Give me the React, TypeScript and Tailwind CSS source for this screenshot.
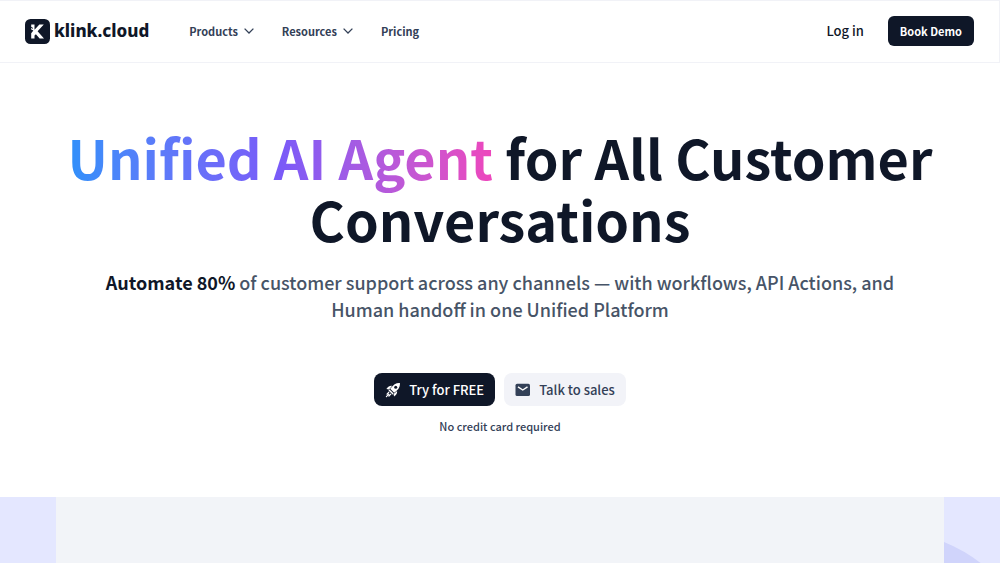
function Chevron() {
  return (
    <svg viewBox="0 0 10 6" className="h-[6px] w-[10px]" fill="none" stroke="currentColor" strokeWidth="1.3" aria-hidden="true">
      <path d="M0.6 0.6 5 5 9.4 0.6" />
    </svg>
  );
}

function Rocket() {
  return (
    <svg viewBox="0 0 16 16" className="size-4" fill="none" aria-hidden="true">
      <path d="M14.9 1C11.4 0.7 8.6 2.2 5.2 6.8L9.2 10.8C13.8 7.4 15.2 4.6 14.9 1Z" fill="#fff" />
      <circle cx="10.7" cy="5.3" r="1.5" fill="#0f1728" />
      <path d="M7 3.9C4.9 3.6 3.2 4.6 1.4 7L4 7.4Z" fill="#fff" />
      <path d="M12.1 9C12.4 11.1 11.4 12.8 9 14.6L8.6 12Z" fill="#fff" />
      <path d="M4.3 8.2 7.8 11.7" stroke="#fff" strokeWidth="1.4" strokeLinecap="round" />
      <path d="M3.9 10.2 2 12.1M5.8 12.1 3.9 14M3.8 12.2 1.4 14.6" stroke="#fff" strokeWidth="1.2" strokeLinecap="round" />
    </svg>
  );
}

function Envelope() {
  return (
    <svg viewBox="0 0 16 14" className="h-[14px] w-4" fill="none" aria-hidden="true">
      <rect x="0.5" y="0.8" width="14.5" height="12.2" rx="1.6" fill="#334057" />
      <path d="M3 3.8 7.75 7 12.5 3.8" stroke="#fff" strokeWidth="1.4" />
    </svg>
  );
}

function Logo() {
  return (
    <a href="#" className="flex items-center gap-1 text-[#0f1728]">
      <svg viewBox="0 0 25 25" className="size-[25px]" aria-hidden="true">
        <rect width="25" height="25" rx="5.5" fill="#0f1728" />
        <path d="M6.2 5.5H9.5V10.8L14.4 5.5H18.8L12.6 12.3 19 19.4H14.6L10.9 15.2 9.5 16.6V19.4H6.2V14.2L8.4 11.6 6.2 10.4Z" fill="#fff" />
        <path d="M5.8 8.2 8 9.4" stroke="#0f1728" strokeWidth="0.9" />
      </svg>
      <span className="font-['Noto_Sans',sans-serif] text-[17px] leading-6 font-extrabold">klink.cloud</span>
    </a>
  );
}

export default function App() {
  return (
    <div className="min-h-screen overflow-hidden bg-white font-['Noto_Sans_CJK_JP','Noto_Sans',sans-serif] text-[#0f1728]">
      <header className="flex h-[63px] items-center justify-between border border-l-0 border-[#f1f2f7] px-[25px] pb-px">
        <div className="flex items-center gap-10">
          <Logo />
          <nav className="flex items-center gap-7 text-[11px] leading-4 font-bold text-[#334057]">
            <button type="button" className="flex items-center gap-[6px]">Products <Chevron /></button>
            <button type="button" className="flex items-center gap-[6px]">Resources <Chevron /></button>
            <a href="#">Pricing</a>
          </nav>
        </div>
        <div className="flex items-center gap-6">
          <a href="#" className="text-[13px] leading-5 font-medium">Log in</a>
          <button type="button" className="h-[30px] rounded-md bg-[#0f1728] px-3 text-[11px] leading-4 font-bold text-white">Book Demo</button>
        </div>
      </header>
      <main>
        <section className="flex flex-col items-center px-5 pt-[63px] text-center">
          <h1 className="max-w-[900px] text-[54px] leading-[62px] font-bold">
            <span className="bg-linear-to-r from-[#2e90fa] via-[#7a5af8] to-[#ee46bc] bg-clip-text text-transparent">Unified AI Agent</span> for All Customer Conversations
          </h1>
          <p className="mt-[19px] max-w-[800px] text-[18px] leading-[27px] font-medium text-[#475467]">
            <strong className="font-bold text-[#0f1728]">Automate 80%</strong> of customer support across any channels — with workflows, API Actions, and Human handoff in one Unified Platform
          </p>
          <div className="mt-[50px] flex gap-[9px] text-[13px] leading-5 font-medium">
            <button type="button" className="flex h-[33px] items-center gap-2 rounded-lg bg-[#0f1728] px-[11px] text-white">
              <Rocket /> Try for FREE
            </button>
            <button type="button" className="flex h-[33px] items-center gap-2 rounded-lg bg-[#f2f3f8] px-[11px] text-[#334057]">
              <Envelope /> Talk to sales
            </button>
          </div>
          <p className="mt-3 text-[11px] leading-4 font-medium text-[#334057]">No credit card required</p>
        </section>
        <section className="relative mt-[63px] h-[67px] overflow-hidden bg-[#e4e7ff] px-14">
          <svg viewBox="0 0 56 67" className="absolute top-0 right-0 h-[67px] w-14" aria-hidden="true">
            <path d="M0 45Q20 53 38 67H0Z" fill="#d0d4fb" />
          </svg>
          <div className="h-full bg-[#f2f4f8]" />
        </section>
      </main>
    </div>
  );
}
